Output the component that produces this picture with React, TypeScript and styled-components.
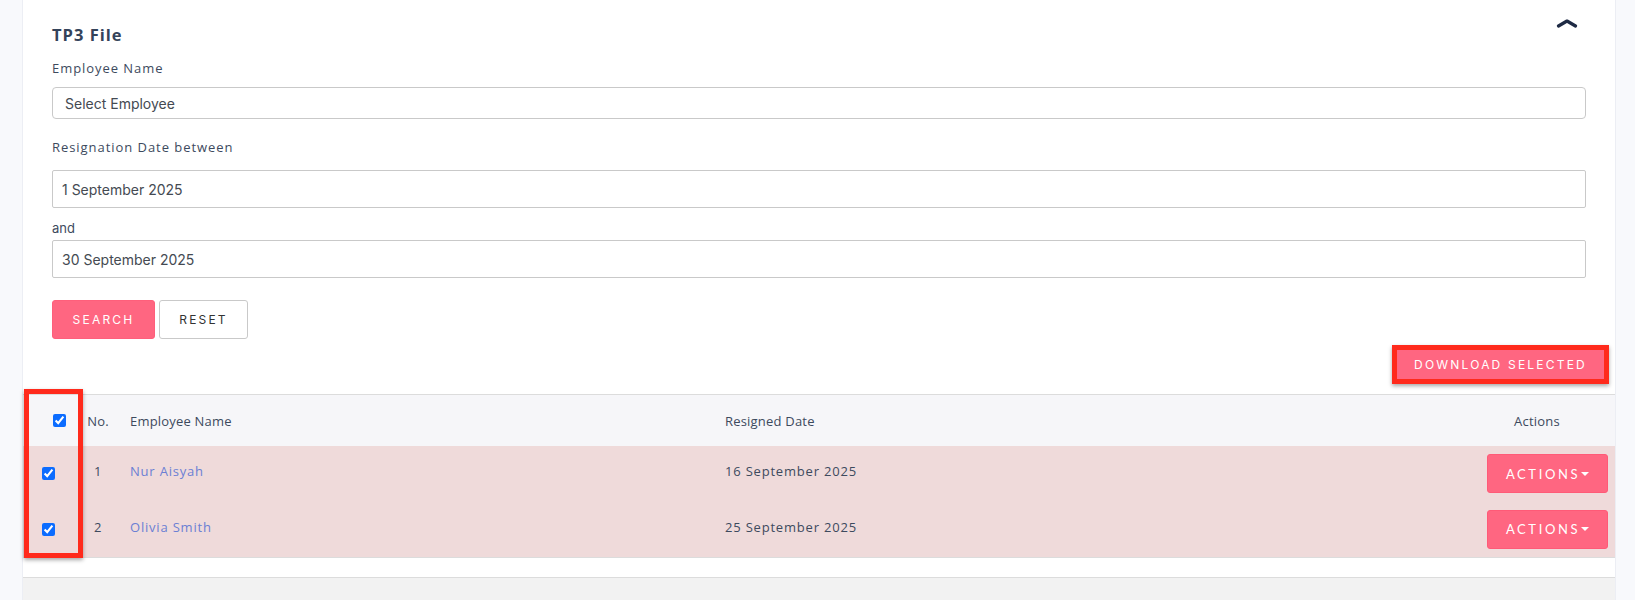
import React from "react";
import styled, { createGlobalStyle } from "styled-components";

const Global = createGlobalStyle`
  html, body { margin: 0; padding: 0; background: #f8f9fc; }
  body { font-family: "Open Sans", "Liberation Sans", sans-serif; }
  * { box-sizing: border-box; }
`;

const Page = styled.div`
  padding: 0 19px 0 22px;
  height: 600px;
  overflow: hidden;
`;

const Card = styled.div`
  position: relative;
  background: #fff;
  border-left: 1px solid #eceef4;
  border-right: 1px solid #eceef4;
`;

const Form = styled.div`
  padding: 24px 29px 0 29px;
`;

const TitleRow = styled.div`
  display: flex;
  justify-content: space-between;
  align-items: flex-start;
  height: 22px;
`;

const Title = styled.h3`
  margin: 0;
  font-family: "Open Sans", sans-serif;
  font-weight: 700;
  font-size: 16.5px;
  line-height: 22px;
  letter-spacing: 1px;
  color: #34435a;
`;

const Chevron = styled.svg`
  margin-top: -6px;
  margin-right: 8px;
`;

const Label = styled.div<{ $mt: number; $font?: string }>`
  margin-top: ${(p) => p.$mt}px;
  font-family: ${(p) => p.$font ?? `"Open Sans", sans-serif`};
  font-size: 13px;
  line-height: 18px;
  letter-spacing: ${(p) => (p.$font ? "0" : "0.95px")};
  color: #3d4a5e;
`;

const Field = styled.div<{ $mt: number; $h: number; $pl: number; $r: number }>`
  margin-top: ${(p) => p.$mt}px;
  height: ${(p) => p.$h}px;
  padding-left: ${(p) => p.$pl}px;
  display: flex;
  align-items: center;
  border: 1px solid #c9c9c9;
  border-radius: ${(p) => p.$r}px;
  font-family: Inter, sans-serif;
  font-size: 14px;
  color: #444a52;
`;

const ButtonRow = styled.div`
  display: flex;
  gap: 4px;
  margin-top: 22px;
`;

const Btn = styled.button<{ $primary?: boolean; $w: number }>`
  width: ${(p) => p.$w}px;
  height: 39px;
  border-radius: 3px;
  border: 1px solid ${(p) => (p.$primary ? "#ff5f7b" : "#c9c9c9")};
  background: ${(p) => (p.$primary ? "#ff6681" : "#fff")};
  color: ${(p) => (p.$primary ? "#fff" : "#333")};
  font-family: Inter, sans-serif;
  font-size: 12px;
  letter-spacing: 2.2px;
  padding: 0;
  cursor: pointer;
`;

const DownloadRow = styled.div`
  display: flex;
  justify-content: flex-end;
  padding: 11px 11px 15px 0;
`;

const Highlight = styled.div`
  position: relative;
  display: inline-flex;
  &::after {
    content: "";
    position: absolute;
    inset: -5px;
    border: 5px solid #ff2a1c;
    box-shadow: 0 2px 4px rgba(0, 0, 0, 0.35);
    pointer-events: none;
  }
`;

const DownloadBtn = styled.button`
  width: 207px;
  height: 29px;
  border: none;
  background: #ff6681;
  color: #fff;
  font-family: Inter, sans-serif;
  font-size: 12px;
  letter-spacing: 2.2px;
  padding: 0;
`;

const Table = styled.div`
  position: relative;
  border-top: 1px solid #dcdcdc;
`;

const Row = styled.div<{ $head?: boolean }>`
  display: grid;
  grid-template-columns: 58px 34px 592px 764px 1fr;
  align-items: center;
  height: ${(p) => (p.$head ? 51 : 55.5)}px;
  background: ${(p) => (p.$head ? "#f6f6f9" : "#efdada")};
  font-family: "Open Sans", sans-serif;
  font-size: 13px;
  letter-spacing: ${(p) => (p.$head ? "0.2px" : "0.8px")};
  color: #3d4a5e;
`;

const CheckCell = styled.div<{ $pl: number }>`
  padding-left: ${(p) => p.$pl}px;
  display: flex;
  align-items: center;
`;

const Check = styled.input`
  margin: 0;
  width: 13px;
  height: 13px;
  accent-color: #0b6cff;
`;

const NumCell = styled.div<{ $lift?: boolean }>`
  text-align: center;
  margin-bottom: ${(p) => (p.$lift ? 5 : 0)}px;
`;

const TextCell = styled.div<{ $pl: number; $lift?: boolean }>`
  padding-left: ${(p) => p.$pl}px;
  margin-bottom: ${(p) => (p.$lift ? 5 : 0)}px;
`;

const NameLink = styled.a`
  color: #6b7fd4;
  text-decoration: none;
`;

const ActionHead = styled.div`
  text-align: center;
  padding-right: 12px;
`;

const ActionCell = styled.div`
  display: flex;
  justify-content: flex-end;
  padding-right: 7px;
`;

const ActionBtn = styled.button`
  width: 121px;
  height: 39px;
  border-radius: 3px;
  border: 1px solid #ff5a77;
  background: #ff6681;
  color: #fff;
  font-family: Lato, sans-serif;
  font-size: 13px;
  letter-spacing: 2.6px;
  padding: 0;
  display: flex;
  align-items: center;
  justify-content: center;
`;

const Caret = styled.span`
  display: inline-block;
  width: 0;
  height: 0;
  margin-left: 1px;
  border-left: 4px solid transparent;
  border-right: 4px solid transparent;
  border-top: 4px solid #fff;
`;

const ColumnMark = styled.div`
  position: absolute;
  left: 1px;
  top: -6px;
  width: 59px;
  height: 169px;
  border: 5px solid #ff2a1c;
  box-shadow: 0 2px 4px rgba(0, 0, 0, 0.35);
  pointer-events: none;
`;

const Spacer = styled.div`
  height: 21px;
  border-top: 1px solid #dcdcdc;
  border-bottom: 1px solid #dcdcdc;
`;

const Footer = styled.div`
  height: 40px;
  background: #f2f2f2;
`;

const rows = [
  { n: 1, name: "Nur Aisyah", date: "16 September 2025" },
  { n: 2, name: "Olivia Smith", date: "25 September 2025" },
];

export default function App() {
  return (
    <Page>
      <Global />
      <Card>
        <Form>
          <TitleRow>
            <Title>TP3 File</Title>
            <Chevron width="22" height="10" viewBox="0 0 22 10">
              <path d="M2.5 8 L11 3 L19.5 8" fill="none" stroke="#1e2a44" strokeWidth="3.2" strokeLinecap="round" strokeLinejoin="round" />
            </Chevron>
          </TitleRow>
          <Label $mt={13}>Employee Name</Label>
          <Field $mt={10} $h={32} $pl={12} $r={4}>Select Employee</Field>
          <Label $mt={19}>Resignation Date between</Label>
          <Field $mt={14} $h={38} $pl={9} $r={2}>1 September 2025</Field>
          <Label $mt={11} $font={`Inter, sans-serif`}>and</Label>
          <Field $mt={3} $h={38} $pl={9} $r={2}>30 September 2025</Field>
          <ButtonRow>
            <Btn $primary $w={103}>SEARCH</Btn>
            <Btn $w={89}>RESET</Btn>
          </ButtonRow>
        </Form>
        <DownloadRow>
          <Highlight>
            <DownloadBtn>DOWNLOAD SELECTED</DownloadBtn>
          </Highlight>
        </DownloadRow>
        <Table>
          <Row $head>
            <CheckCell $pl={30}>
              <Check type="checkbox" defaultChecked />
            </CheckCell>
            <NumCell>No.</NumCell>
            <TextCell $pl={15}>Employee Name</TextCell>
            <TextCell $pl={18}>Resigned Date</TextCell>
            <ActionHead>Actions</ActionHead>
          </Row>
          {rows.map((r) => (
            <Row key={r.n}>
              <CheckCell $pl={19}>
                <Check type="checkbox" defaultChecked />
              </CheckCell>
              <NumCell $lift>{r.n}</NumCell>
              <TextCell $pl={15} $lift>
                <NameLink href="#">{r.name}</NameLink>
              </TextCell>
              <TextCell $pl={18} $lift>{r.date}</TextCell>
              <ActionCell>
                <ActionBtn>
                  ACTIONS<Caret />
                </ActionBtn>
              </ActionCell>
            </Row>
          ))}
          <ColumnMark />
        </Table>
        <Spacer />
        <Footer />
      </Card>
    </Page>
  );
}
